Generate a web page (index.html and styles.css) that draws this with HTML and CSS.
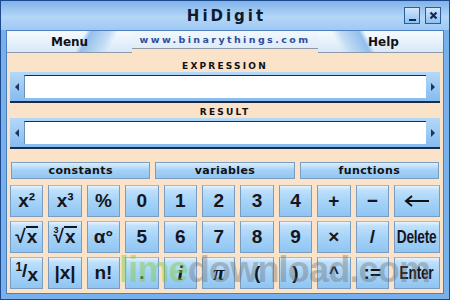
FILE: index.html
```html
<!DOCTYPE html>
<html>

<head>
    <meta charset="UTF-8">
    <title>HiDigit</title>
    <link rel="stylesheet" href="styles.css">
</head>

<body>
    <div class="window">
        <div class="titlebar">
            <span></span>
            <h1 class="title">HiDigit</h1>
            <div class="winbtns">
                <span class="winbtn"><span class="minbar"></span></span>
                <span class="winbtn">
                    <svg width="9" height="9" viewBox="0 0 9 9">
                        <path d="M1.5 1.5 L7.5 7.5 M7.5 1.5 L1.5 7.5" stroke="#0f2a5c" stroke-width="2.2" />
                    </svg>
                </span>
            </div>
        </div>
        <div class="inner">
            <div class="menubar">
                <div class="menu menu-left">Menu</div>
                <div class="site">www.binarythings.com</div>
                <div class="menu menu-right">Help</div>
            </div>
            <div class="panel">
                <div class="label">EXPRESSION</div>
                <div class="field">
                    <span class="arrow arrow-l"></span>
                    <div class="entry"></div>
                    <span class="arrow arrow-r"></span>
                </div>
                <div class="label label-2">RESULT</div>
                <div class="field">
                    <span class="arrow arrow-l"></span>
                    <div class="entry"></div>
                    <span class="arrow arrow-r"></span>
                </div>
                <div class="tabs">
                    <div class="tab">constants</div>
                    <div class="tab">variables</div>
                    <div class="tab">functions</div>
                </div>
                <div class="keys">
                    <div class="key">x²</div>
                    <div class="key">x³</div>
                    <div class="key">%</div>
                    <div class="key">0</div>
                    <div class="key">1</div>
                    <div class="key">2</div>
                    <div class="key">3</div>
                    <div class="key">4</div>
                    <div class="key">+</div>
                    <div class="key">−</div>
                    <div class="key">
                        <svg width="26" height="12" viewBox="0 0 26 12">
                            <path d="M2 6 H25" stroke="#111" stroke-width="2" />
                            <path d="M8 1 L2 6 L8 11" stroke="#111" stroke-width="2" fill="none" />
                        </svg>
                    </div>

                    <div class="key"><span class="rad">√<span class="over">x</span></span></div>
                    <div class="key"><span class="rad"><sup class="idx">3</sup>√<span class="over">x</span></span></div>
                    <div class="key">α°</div>
                    <div class="key">5</div>
                    <div class="key">6</div>
                    <div class="key">7</div>
                    <div class="key">8</div>
                    <div class="key">9</div>
                    <div class="key">×</div>
                    <div class="key">/</div>
                    <div class="key key-word"><span class="narrow">Delete</span></div>

                    <div class="key"><span class="frac"><sup>1</sup>/<sub>x</sub></span></div>
                    <div class="key">|x|</div>
                    <div class="key">n!</div>
                    <div class="key">.</div>
                    <div class="key key-serif">i</div>
                    <div class="key key-serif">π</div>
                    <div class="key">(</div>
                    <div class="key">)</div>
                    <div class="key key-caret">^</div>
                    <div class="key">:=</div>
                    <div class="key key-word"><span class="narrow">Enter</span></div>
                </div>
            </div>
        </div>
        <div class="watermark"><span class="lime">lime</span>download.com</div>
    </div>
</body>

</html>
```

FILE: styles.css
```css
body {
    margin: 0;
    background: #ffffff;
}

.window {
    position: relative;
    width: 450px;
    height: 300px;
    box-sizing: border-box;
    border: 1px solid #1d4a8c;
    background: #78b0ec;
    padding: 0 5px 5px;
    display: flex;
    flex-direction: column;
    overflow: hidden;
}

/* title bar */
.titlebar {
    margin: 0 -5px;
    height: 29px;
    display: grid;
    grid-template-columns: 1fr auto 1fr;
    align-items: center;
    background: linear-gradient(#80b2ea, #b4d6f8 55%, #9fc9f3);
}

.title {
    margin: 0;
    font-family: "DejaVu Sans", Verdana, sans-serif;
    font-size: 15px;
    font-weight: bold;
    letter-spacing: 3px;
    color: #0d1a30;
    padding-left: 3px;
}

.winbtns {
    justify-self: end;
    display: flex;
    gap: 5px;
    padding-right: 8px;
}

.winbtn {
    width: 16px;
    height: 17px;
    box-sizing: border-box;
    border: 1px solid #2b5c9e;
    background: linear-gradient(#d2e7fc, #8fc0f0);
    display: flex;
    align-items: center;
    justify-content: center;
}

.minbar {
    width: 7px;
    height: 2px;
    background: #0f2a5c;
    margin-top: 8px;
}

/* client area */
.inner {
    flex: 1;
    border: 1px solid #4b7fc0;
    background: #fae3c9;
    display: flex;
    flex-direction: column;
}

.menubar {
    height: 22px;
    display: flex;
}

.menu {
    width: 125px;
    box-sizing: border-box;
    border-bottom: 1px solid #8d9aa8;
    font-family: "DejaVu Sans", Verdana, sans-serif;
    font-size: 12px;
    font-weight: bold;
    color: #111;
    line-height: 22px;
}

.menu-left {
    padding-left: 44px;
    background:
        linear-gradient(118deg, transparent 58%, #94bfec 62%, #c3dcf4 76%, transparent 82%),
        linear-gradient(#f6fafe, #d8e8f8);
}

.menu-right {
    padding-left: 50px;
    background:
        linear-gradient(242deg, transparent 58%, #94bfec 62%, #c3dcf4 76%, transparent 82%),
        linear-gradient(#f6fafe, #d8e8f8);
}

.site {
    flex: 1;
    text-align: center;
    font-family: "DejaVu Sans", Verdana, sans-serif;
    font-size: 9.5px;
    font-weight: bold;
    letter-spacing: 2.4px;
    color: #2d4f9c;
    line-height: 18px;
    background: linear-gradient(#f2f8fe 0, #dfebf8 17px, #8d9aa8 17px, #8d9aa8 18px, #fae3c9 18px);
}

.panel {
    flex: 1;
    padding: 0 3px 3px;
    display: flex;
    flex-direction: column;
}

.label {
    margin-top: 8px;
    height: 11px;
    line-height: 11px;
    text-align: center;
    font-family: "DejaVu Sans", Verdana, sans-serif;
    font-size: 9px;
    font-weight: bold;
    letter-spacing: 2.2px;
    color: #111;
}

.label-2 {
    margin-top: 4px;
}

.field {
    height: 31px;
    box-sizing: border-box;
    border-bottom: 2px solid #1b2b4c;
    background: linear-gradient(#b4d8f8, #86bcee);
    display: flex;
    align-items: stretch;
    padding: 3px 0;
}

.entry {
    flex: 1;
    background: #ffffff;
    border-top: 1px solid #1b2b4c;
    border-left: 1px solid #6d8fb3;
}

.arrow {
    width: 14px;
    display: flex;
    align-items: center;
    justify-content: center;
}

.arrow::before {
    content: "";
    border-top: 4px solid transparent;
    border-bottom: 4px solid transparent;
}

.arrow-l::before {
    border-right: 4px solid #1a3566;
}

.arrow-r::before {
    border-left: 4px solid #1a3566;
}

.tabs {
    margin-top: 13px;
    height: 17px;
    display: flex;
    gap: 5px;
    padding: 0 1px;
}

.tab {
    flex: 1;
    box-sizing: border-box;
    border: 1px solid #7d9dbd;
    background: linear-gradient(#dcefff, #a4d0f6 50%, #92c5f2);
    text-align: center;
    font-family: "DejaVu Sans", Verdana, sans-serif;
    font-size: 11px;
    font-weight: bold;
    letter-spacing: 0.4px;
    line-height: 15px;
    color: #111;
}

.keys {
    margin-top: 6px;
    display: grid;
    grid-template-columns: repeat(10, 1fr) 46px;
    grid-auto-rows: 32px;
    gap: 4px 5px;
}

.key {
    box-sizing: border-box;
    border: 1px solid #7a9cbe;
    border-top-color: #9dbad6;
    background: linear-gradient(#e6f3fe 0, #bfe0fb 4px, #a6d3f8 50%, #8fc5f2);
    display: flex;
    align-items: center;
    justify-content: center;
    font-family: "Liberation Sans", Arial, sans-serif;
    font-size: 19px;
    font-weight: bold;
    color: #15151f;
}

.key-word {
    font-size: 19px;
}

.narrow {
    display: inline-block;
    transform: scaleX(0.72);
    letter-spacing: -0.3px;
}

.key-serif {
    font-family: "Liberation Serif", "Times New Roman", serif;
    font-style: italic;
    font-size: 21px;
}

.key-caret {
    font-size: 17px;
}

.rad {
    display: inline-flex;
    align-items: flex-start;
}

.over {
    border-top: 2px solid #15151f;
    line-height: 18px;
    padding: 0 1px;
}

.idx {
    font-size: 9px;
    margin-right: -5px;
    line-height: 9px;
}

.frac sup {
    font-size: 12px;
    vertical-align: 6px;
}

.frac sub {
    font-size: 19px;
    vertical-align: -4px;
}

.watermark {
    position: absolute;
    left: 118px;
    top: 248px;
    font-family: "Liberation Sans", Arial, sans-serif;
    font-size: 36px;
    font-weight: bold;
    letter-spacing: -0.8px;
    color: rgba(110, 110, 110, 0.4);
    pointer-events: none;
}

.lime {
    color: rgba(130, 205, 80, 0.5);
}
```
